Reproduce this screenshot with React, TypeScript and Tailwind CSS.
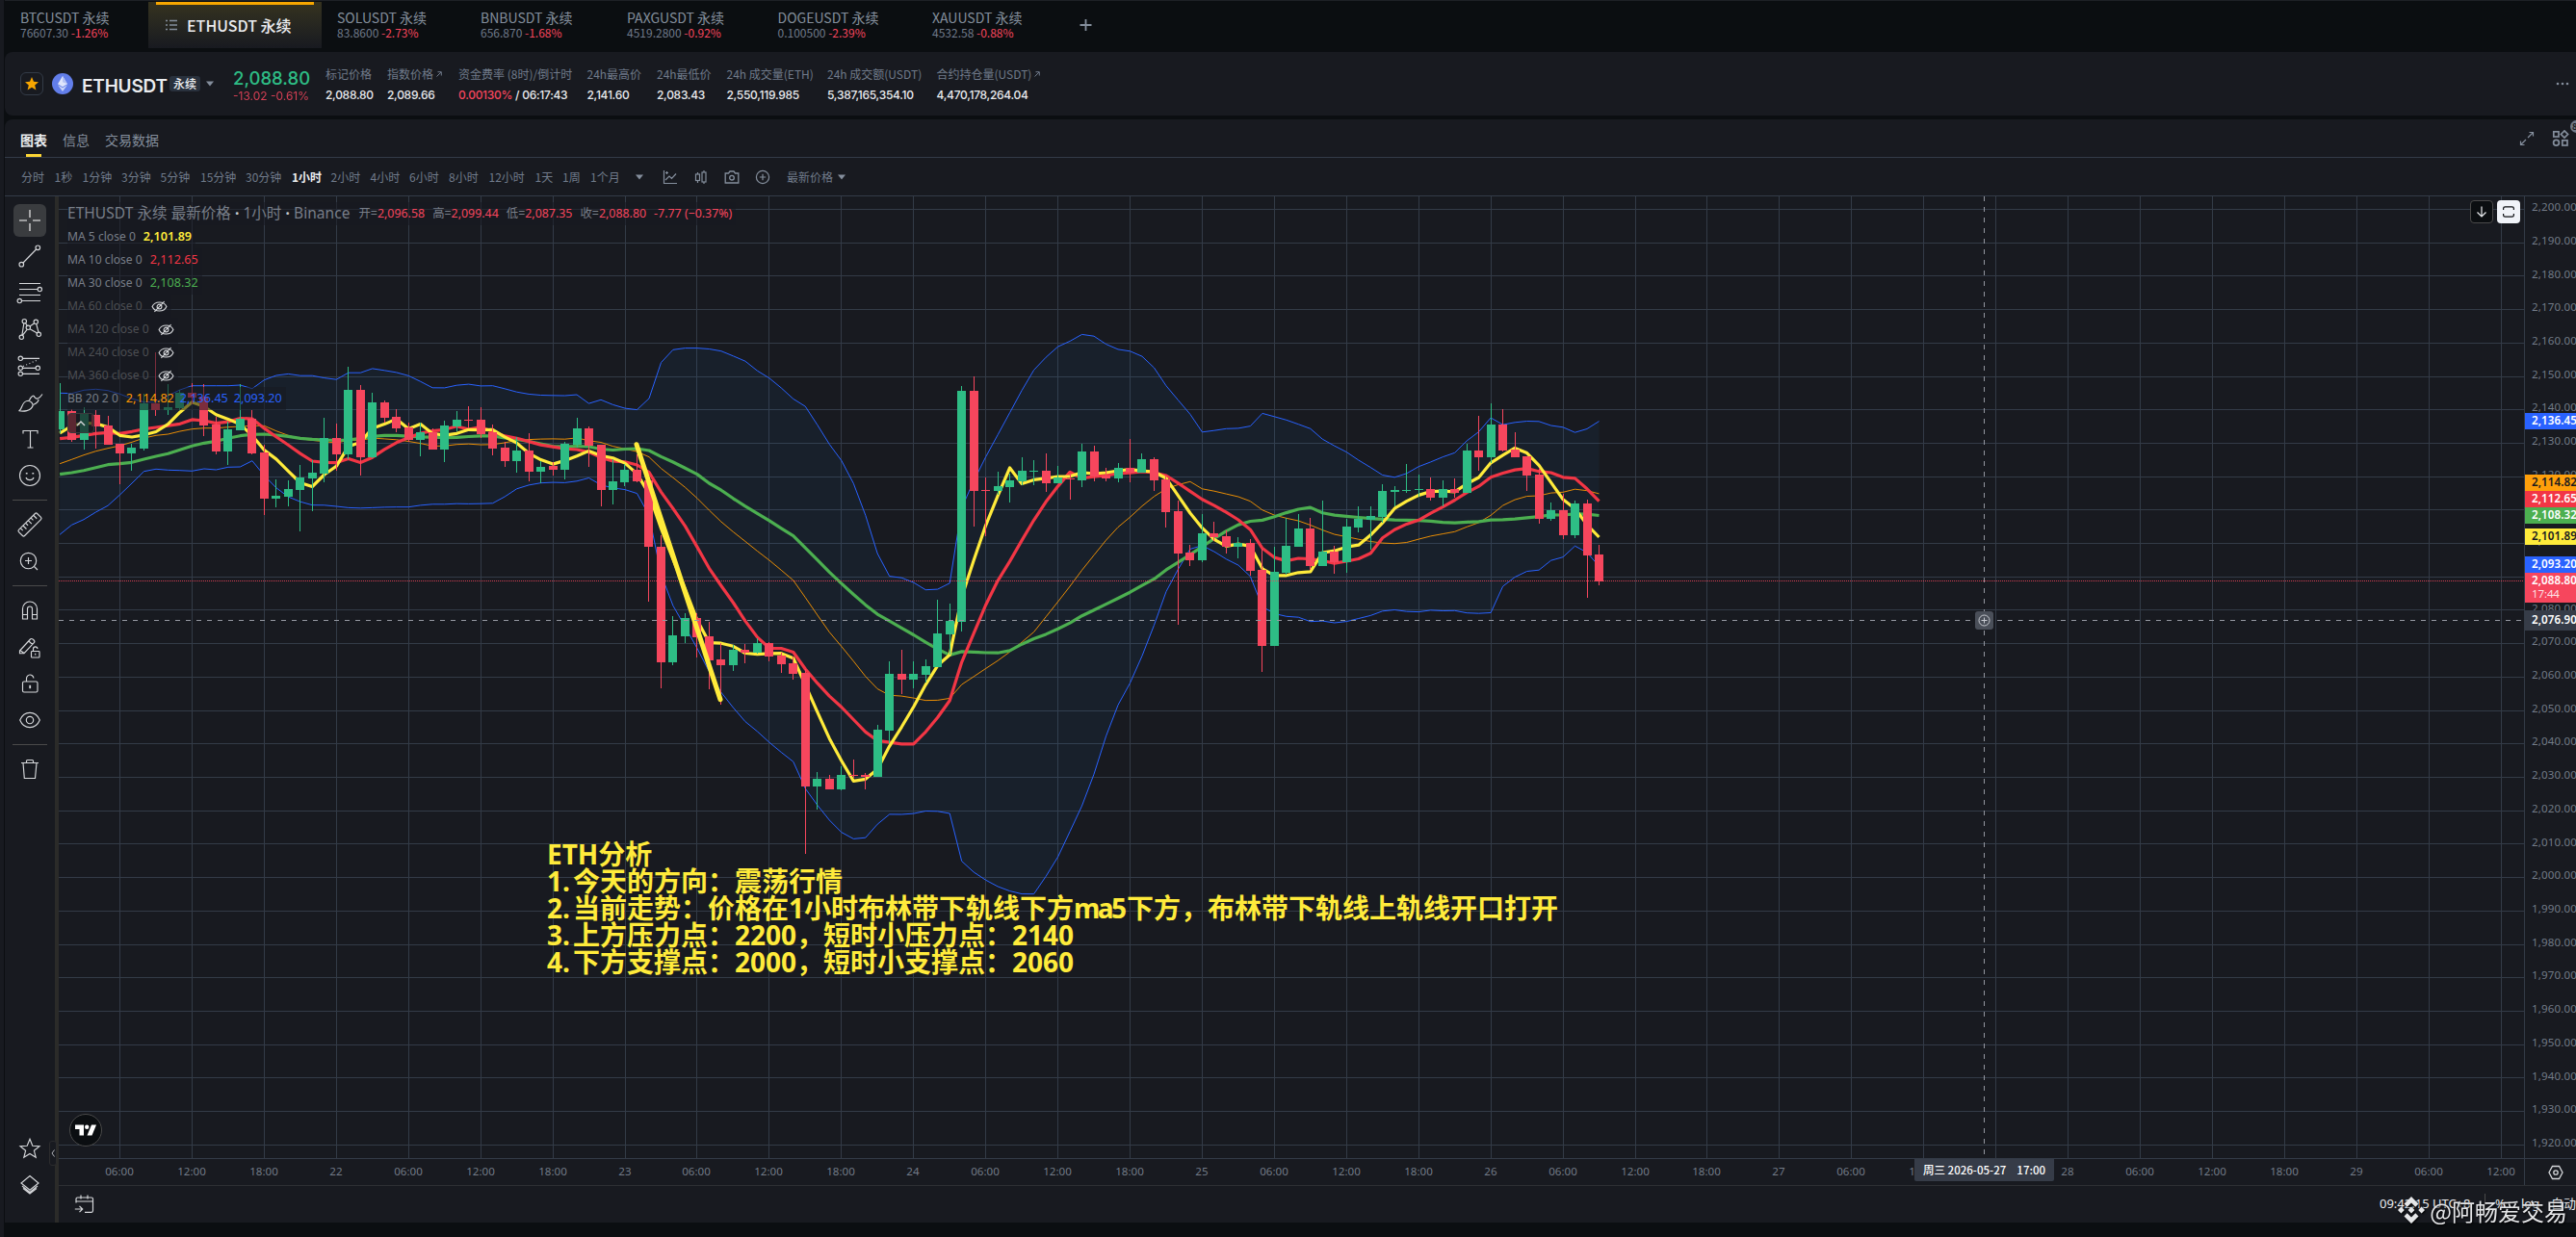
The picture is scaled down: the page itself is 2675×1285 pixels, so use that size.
import React from "react";

/* ---------- chart geometry ---------- */
const CHART_W = 2560;
const CHART_H = 999;
const LEFT = 61;
const TOP = 204;
const BAR = 12.488;
const FIRST = -5;
const barX = (i: number) => 124.5 + BAR * i - LEFT;
const priceY = (p: number) => 217.5 + ((2200 - p) / 10) * 34.708 - TOP;

type Row = [number, number, number, number, number]; // up, bodyTop, bodyBottom, high, low
type Candle = { up: boolean; top: number; bottom: number; high: number; low: number };

// Every series block keeps its heights in its own unit, measured from its own base line.
const block = (base: number, unit: number, rows: Row[]): Candle[] =>
  rows.map(([up, a, b, h, l]) => ({
    up: up === 1,
    top: base + a / unit - TOP,
    bottom: base + b / unit - TOP,
    high: base + h / unit - TOP,
    low: base + l / unit - TOP,
  }));

const candles: Candle[] = [
  ...block(190, 3, [
    [1, 711, 768, 624, 780], [0, 711, 800, 706, 808], [1, 720, 800, 700, 830], [0, 723, 758, 708, 828],
    [0, 756, 815, 726, 815], [0, 813, 842, 813, 938], [1, 825, 842, 813, 896], [1, 687, 827, 657, 833],
    [0, 687, 708, 528, 726], [1, 699, 708, 628, 723], [1, 654, 702, 645, 708], [0, 654, 668, 624, 690],
    [0, 666, 755, 627, 789], [0, 753, 836, 729, 846], [1, 768, 836, 744, 879], [1, 735, 770, 627, 770],
    [0, 735, 842, 707, 846], [0, 840, 983, 815, 1034], [1, 975, 983, 924, 1010], [1, 954, 978, 927, 1007],
    [1, 918, 956, 879, 1086], [1, 903, 920, 864, 1022], [1, 795, 905, 732, 933], [0, 795, 845, 750, 896],
    [1, 645, 845, 573, 860], [0, 645, 854, 630, 912], [1, 684, 854, 654, 857], [0, 684, 731, 678, 747],
    [0, 729, 765, 705, 777],
  ]),
  ...block(330, 2.703, [
    [0, 307, 343, 295, 350], [1, 323, 343, 295, 389], [0, 323, 370, 312, 370], [1, 303, 370, 289, 406],
    [1, 287, 305, 262, 320], [0, 287, 289, 249, 312], [0, 287, 327, 251, 337], [0, 323, 367, 300, 387],
    [0, 365, 403, 350, 419], [1, 373, 403, 335, 435], [0, 373, 433, 324, 460], [1, 419, 433, 402, 465],
    [0, 416, 427, 406, 443], [1, 354, 427, 349, 454], [1, 311, 358, 281, 364], [0, 311, 360, 305, 419],
    [0, 357, 484, 357, 530], [1, 460, 484, 398, 524], [1, 427, 462, 412, 473], [0, 427, 460, 384, 463],
    [0, 457, 643, 450, 798], [0, 643, 968, 611, 1041], [1, 892, 968, 838, 976], [1, 843, 895, 830, 914],
    [0, 843, 898, 830, 954], [0, 895, 962, 854, 1044], [0, 960, 976, 914, 1087], [1, 933, 976, 919, 992],
    [0, 933, 941, 916, 971], [1, 914, 941, 900, 944], [0, 914, 952, 911, 965], [0, 949, 973, 941, 998],
    [0, 971, 1000, 952, 1016], [0, 998, 1317, 987, 1506], [1, 1295, 1317, 1276, 1381],
  ]),
  ...block(330, 2.529, [
    [0, 1211, 1239, 1201, 1239], [1, 1201, 1239, 1179, 1242], [0, 1201, 1203, 1161, 1208], [0, 1201, 1206, 1196, 1239],
    [1, 1082, 1206, 1070, 1206], [1, 936, 1085, 903, 1118], [0, 936, 951, 873, 989], [1, 936, 951, 903, 974],
    [1, 916, 938, 898, 959], [1, 830, 918, 741, 918], [1, 797, 832, 751, 885], [1, 192, 799, 180, 824],
    [0, 192, 455, 154, 549], [0, 453, 455, 420, 574], [1, 443, 455, 405, 465], [1, 427, 445, 410, 486],
    [1, 402, 430, 367, 440], [1, 402, 404, 374, 440], [0, 402, 435, 357, 458], [1, 420, 435, 389, 435],
    [0, 422, 425, 410, 478], [1, 352, 427, 331, 445], [0, 352, 417, 336, 430], [0, 415, 422, 395, 430],
    [1, 395, 422, 382, 432], [0, 395, 407, 319, 432], [1, 372, 407, 357, 407], [0, 372, 427, 367, 455],
    [0, 425, 511, 415, 551], [0, 508, 620, 481, 807], [0, 617, 637, 597, 652], [1, 567, 637, 516, 642],
    [0, 567, 577, 536, 587],
  ]),
  ...block(380, 3, [
    [0, 531, 563, 513, 585], [1, 552, 563, 534, 600], [0, 552, 639, 540, 655], [0, 636, 873, 570, 954],
    [1, 642, 873, 564, 873], [1, 561, 645, 475, 651], [1, 507, 564, 462, 564], [0, 507, 624, 474, 636],
    [1, 579, 624, 420, 624], [0, 579, 612, 561, 648], [1, 501, 612, 477, 645], [1, 477, 504, 438, 519],
    [1, 468, 480, 438, 573], [1, 390, 471, 369, 489], [1, 387, 393, 375, 438], [1, 387, 389, 306, 396],
    [1, 384, 387, 339, 408], [0, 384, 411, 348, 420], [1, 384, 411, 357, 438], [0, 384, 396, 351, 411],
    [1, 264, 396, 243, 396], [0, 264, 285, 156, 327], [1, 183, 285, 117, 303], [0, 183, 264, 135, 267],
    [0, 261, 285, 207, 285], [0, 282, 342, 282, 390], [0, 339, 477, 318, 492], [1, 450, 477, 426, 483],
    [0, 450, 528, 399, 540], [1, 429, 528, 420, 537], [0, 429, 591, 417, 723], [0, 588, 672, 558, 684],
  ]),
];

const closes = candles.map((c) => (c.up ? c.top : c.bottom));
const seed = (vals: number[]) => vals.map((v) => 190 + v / 3 - TOP);

// Moving average; the bars before a full window come from the seed.
const sma = (n: number, lead: number[]) =>
  closes.map((_, k) =>
    k < lead.length ? lead[k] : closes.slice(k - n + 1, k + 1).reduce((a, b) => a + b, 0) / n
  );

const ma5 = sma(5, seed([780, 757, 748, 750]));
const ma10 = sma(10, seed([797, 793, 787, 781, 778, 781, 775, 767, 762]));
const mid = sma(20, seed([875, 862, 848, 836, 827, 819, 808, 795, 787, 783, 774, 767, 764, 764, 761, 759, 757, 757, 773]));
const ma30 = sma(30, seed([
  908, 903, 896, 887, 878, 875, 871, 861, 852, 844, 832, 820, 811, 805, 796, 788, 784, 783, 786, 790, 796, 799, 801, 802,
  801, 796, 790, 787, 787,
]));
const upperLead = seed([655, 656, 646, 643, 647, 658, 672, 683, 683, 663, 645, 632, 632, 632, 632, 630, 641, 614, 600]);
const lowerLead = seed([1096, 1066, 1049, 1026, 1006, 972, 936, 899, 892, 895, 896, 898, 891, 894, 886, 885, 866, 912, 950]);
const dev = closes.map((_, k) => {
  if (k < 19) return 0;
  const w = closes.slice(k - 19, k + 1);
  return 2 * Math.sqrt(w.reduce((a, b) => a + (b - mid[k]) ** 2, 0) / 20);
});
const upper = mid.map((m, k) => (k < 19 ? upperLead[k] : m - dev[k]));
const lower = mid.map((m, k) => (k < 19 ? lowerLead[k] : m + dev[k]));

const pts = (ys: number[]) => ys.map((y, k) => `${(barX(k + FIRST)).toFixed(1)},${y.toFixed(1)}`);

const vGrid = Array.from({ length: 34 }, (_, k) => Math.floor(124.5 + 74.93 * k) - LEFT + 0.5);
const prices = Array.from({ length: 29 }, (_, k) => 2200 - k * 10);
const fmt = (p: number) => `${Math.floor(p / 1000)},${String(p % 1000).padStart(3, "0")}.00`;

const days: Record<number, string> = { 3: "22", 7: "23", 11: "24", 15: "25", 19: "26", 23: "27", 27: "28", 31: "29" };
const timeLabel = (k: number) => days[k] ?? ["06:00", "12:00", "18:00"][k % 4];

function Chart() {
  return (
    <svg width={CHART_W} height={CHART_H} className="block">
      <g stroke="#333b47" strokeWidth="1">
        {vGrid.map((x) => <path key={x} d={`M${x} 0V${CHART_H}`} />)}
        {prices.map((p) => <path key={p} d={`M0 ${Math.floor(priceY(p)) + 0.5}H${CHART_W}`} />)}
      </g>
      <polygon points={[...pts(upper), ...pts(lower).reverse()].join(" ")} fill="#2196f3" fillOpacity="0.055" />
      <g fill="none" strokeLinejoin="round">
        <polyline points={pts(upper).join(" ")} stroke="#2962ff" strokeWidth="1" />
        <polyline points={pts(lower).join(" ")} stroke="#2962ff" strokeWidth="1" />
        <polyline points={pts(mid).join(" ")} stroke="#ff9800" strokeWidth="0.9" />
        <polyline points={pts(ma30).join(" ")} stroke="#4caf50" strokeWidth="3.2" />
        <polyline points={pts(ma10).join(" ")} stroke="#f23645" strokeWidth="3.2" />
        <polyline points={pts(ma5).join(" ")} stroke="#ffeb3b" strokeWidth="3.2" />
      </g>
      <g shapeRendering="crispEdges">
        {candles.map((c, k) => {
          const x = Math.floor(barX(k + FIRST));
          return (
            <g key={k} fill={c.up ? "#2ebd85" : "#f6465d"}>
              <rect x={x} y={c.high} width="1" height={Math.max(1, c.low - c.high)} />
              <rect x={x - 4} y={c.top} width="9" height={Math.max(1, c.bottom - c.top)} />
            </g>
          );
        })}
      </g>
      <path d="M0 399.5H2560" stroke="#f6465d" strokeDasharray="1 1" strokeOpacity="0.85" shapeRendering="crispEdges" />
      <path d="M600 257.7L687 522.6" stroke="#ffeb3b" strokeWidth="5" strokeLinecap="round" />
      <path d="M0 440.5H2560M1999.5 0V999" stroke="#9598a1" strokeDasharray="5 6" />
      <rect x="1990" y="431" width="19" height="19" rx="3" fill="#4a4f59" />
      <circle cx="1999.5" cy="440.5" r="5.5" fill="none" stroke="#c9ccd2" />
      <path d="M1999.5 437.5v6M1996.5 440.5h6" stroke="#c9ccd2" />
    </svg>
  );
}

const tags: [string, number, number, string, string][] = [
  ["2,136.45", 429, 17, "#2962ff", "#fff"],
  ["2,114.82", 493, 17, "#ff9f0a", "#181a20"],
  ["2,112.65", 510, 17, "#f23645", "#fff"],
  ["2,108.32", 527, 17, "#4caf50", "#fff"],
  ["2,101.89", 549, 17, "#ffeb3b", "#181a20"],
  ["2,093.20", 578, 17, "#2962ff", "#fff"],
  ["2,088.80", 595, 31, "#f6465d", "#fff"],
  ["2,076.90", 634, 21, "#363c48", "#fff"],
];

function PriceAxis() {
  return (
    <svg width="54" height={CHART_H} className="block border-l border-[#333b47]" fontFamily='"Noto Sans",sans-serif' fontSize="11.6">
      {prices.map((p) => (
        <text key={p} x="7" y={priceY(p) + 1.6} textLength="47" fill="#848e9c" fillOpacity="0.85">{fmt(p)}</text>
      ))}
      {tags.map(([t, y, h, bg, fg]) => (
        <g key={t}>
          <rect x="0" y={y - TOP} width="54" height={h} fill={bg} />
          <text x="7" y={y - TOP + (h === 21 ? 14 : 12)} textLength="47" fill={fg} fontWeight="600">{t}</text>
        </g>
      ))}
      <text x="7" y="417" textLength="29" fill="#fff" fillOpacity="0.85">17:44</text>
    </svg>
  );
}

function TimeAxis() {
  return (
    <div className="relative h-[28px] w-[2560px] shrink-0 overflow-hidden">
      <svg width="2560" height="28" className="block" fontFamily='"Noto Sans",sans-serif' fontSize="11.6" textAnchor="middle" fill="#848e9c" fillOpacity="0.85">
        {vGrid.map((x, k) => (
          <text key={k} x={x - 0.5} y="17">{timeLabel(k)}</text>
        ))}
      </svg>
      <div className="absolute left-[1927px] top-0 flex h-[23px] w-[145px] items-center justify-between rounded-b-xs bg-[#363c48] px-[9px] text-[11.5px] font-medium text-white">
        <span>周三 2026-05-27</span>
        <span>17:00</span>
      </div>
    </div>
  );
}

/* ---------- icons ---------- */
function Tool({ h, children }: { h: number; children: React.ReactNode }) {
  return (
    <div className="flex w-full shrink-0 items-center justify-center" style={{ height: h }}>
      <svg width="36" height="36" viewBox="0 0 36 36" fill="none" stroke="#d5d7da" strokeWidth="1.15">{children}</svg>
    </div>
  );
}
const Sep = () => <div className="mx-[8px] h-px w-[36px] shrink-0 bg-[#4a4a4a]" />;

function EyeOff() {
  return (
    <svg width="17" height="13" viewBox="0 0 18 14" fill="none" stroke="#d5d7da" strokeWidth="1.2">
      <path d="M1 7C4 0.500 14 0.500 17 7C14 13.500 4 13.500 1 7Z" />
      <circle cx="9" cy="7" r="2.600" />
      <path d="M3.500 12.800L14.500 1.200" />
    </svg>
  );
}

const Caret = () => (
  <svg width="8" height="6" viewBox="0 0 8 6" fill="#848e9c"><path d="M0 0.500H8L4 5.500Z" /></svg>
);

function LeftTools() {
  return (
    <aside className="flex w-[52px] shrink-0 flex-col pt-[6px]">
      <div className="mx-[9px] mt-[2px] flex h-[34px] w-[34px] shrink-0 items-center justify-center rounded-md bg-[#3a3c3f]">
        <svg width="24" height="24" viewBox="0 0 24 24" fill="none" stroke="#fff" strokeWidth="1.1">
          <path d="M12 1v8M12 15v8M1 12h8M15 12h8" />
        </svg>
      </div>
      <div className="h-px shrink-0" />
      <Tool h={38}><circle cx="9.300" cy="26.700" r="2.300" /><circle cx="26.300" cy="9.300" r="2.300" /><path d="M11 25L24.600 11" /></Tool>
      <Tool h={38}><path d="M7 8.500h22M7 14.500h19M7 20.500h22M10 26.500h19" /><circle cx="28.300" cy="14.500" r="2.200" /><circle cx="7.300" cy="26.500" r="2.200" /></Tool>
      <Tool h={38}>
        <path d="M9.900 24.200L11.800 12M13.500 11.600L15.300 14.500M10.400 24.400L15.300 18.200M18 15L22.700 11.700M24.700 12.500L27 21.200M18 17.700L25.600 22" />
        <circle cx="12.300" cy="9.700" r="2.200" /><circle cx="24.300" cy="10.300" r="2.200" /><circle cx="16.300" cy="16.300" r="2.200" /><circle cx="9.300" cy="26.300" r="2.200" /><circle cx="27.300" cy="23.300" r="2.200" />
      </Tool>
      <Tool h={38}>
        <circle cx="8.300" cy="10.300" r="2.200" /><circle cx="8.300" cy="20.300" r="2.200" /><circle cx="26.300" cy="20.300" r="2.200" /><circle cx="8.300" cy="26.300" r="2.200" />
        <path d="M10.500 10.300H28M10.500 20.300H24M10.500 26.300H28" /><path d="M11 18.500L27 11.500" strokeDasharray="1 2.500" />
      </Tool>
      <Tool h={38}>
        <path d="M6.500 26.700C11 25.500 8.500 16.500 16.500 16.200C19 17 21 19 21.200 21C19.500 27.500 11 27.500 6.500 26.700Z" />
        <path d="M17.500 16C18 14.500 20 11 22 11M21.500 20.500C25 19 27 17.500 27 15M22 11C24.500 16.500 28 14 31 9.500" />
      </Tool>
      <Tool h={38}><path d="M11 12.500V9.500H26V12.500M18.500 9.500V27M15.500 27H21.500" /></Tool>
      <Tool h={38}><circle cx="18" cy="18" r="10.500" /><path d="M14 20c1 3.500 7 3.500 8 0" /><path d="M14.700 15v1.500M21.300 15v1.500" strokeWidth="1.800" /></Tool>
      <div className="h-[6px] shrink-0" />
      <Sep />
      <div className="h-[6px] shrink-0" />
      <Tool h={38}><g transform="rotate(-45 18 18)"><rect x="4.500" y="13.700" width="27" height="8.600" rx="1.500" /><path d="M8.500 13.700v3.500M12.300 13.700v5M16.100 13.700v3.500M19.900 13.700v5M23.700 13.700v3.500M27.500 13.700v5" /></g></Tool>
      <Tool h={38}><circle cx="16.500" cy="17.500" r="8.200" /><path d="M16.500 14v7M13 17.500h7M22.500 23.500L26 27" /></Tool>
      <div className="h-[6px] shrink-0" />
      <Sep />
      <div className="h-[6px] shrink-0" />
      <Tool h={38}><path d="M10.500 27V16.500a7.500 7.500 0 0 1 15 0V27H20.500V16.500a2.500 2.500 0 0 0 -5 0V27ZM10.500 22.500h5M20.500 22.500h5" /></Tool>
      <Tool h={38}><path d="M7.500 22L18.500 10C20 8.500 24 11.500 22.500 13.500L12 24.700H7.500ZM16.800 12L20.800 15.500M7.800 21.500L12 24.500" /><rect x="19.500" y="22.500" width="8.500" height="6.500" rx="0.800" /><path d="M21.500 22.500V20a2.200 2.200 0 0 1 4.400 0" /><path d="M23.700 24.800v1.600" /></Tool>
      <Tool h={38}><rect x="10.500" y="16" width="15.500" height="11" rx="1.500" /><path d="M14.500 16V13a3.700 3.700 0 0 1 7.400 -0.500" /><path d="M18.200 19.800v3.400" strokeWidth="1.800" /></Tool>
      <Tool h={38}><path d="M7.700 18C12 7.800 24 7.800 28.300 18C24 28.200 12 28.200 7.700 18Z" /><circle cx="18" cy="18" r="3.700" /></Tool>
      <div className="h-[6px] shrink-0" />
      <Sep />
      <div className="h-[6px] shrink-0" />
      <Tool h={38}><path d="M9 11.500H27M14.500 11.500V9.500c0-.8.500-1 1-1h5c.5 0 1 .2 1 1V11.500M11 11.500L12.300 27.500H23.500L25 11.500" /></Tool>
      <div className="min-h-0 flex-1" />
      <Tool h={38}><path d="M18 8.300L20.800 15.200L28 15.700L22.400 20.300L24.200 27.300L18 23.500L11.800 27.300L13.600 20.300L8 15.700L15.200 15.200Z" /></Tool>
      <Tool h={38}><path d="M18 8.500L27 16L18 23.200L9 16ZM10 19L18 25.500L26 19M11 21.500L18 27L25 21.500" /></Tool>
      <div className="h-[20px] shrink-0" />
    </aside>
  );
}

/* ---------- data ---------- */
const symbols: [string, string, string, number][] = [
  ["SOLUSDT", "83.8600", "-2.73%", 149],
  ["BNBUSDT", "656.870", "-1.68%", 152],
  ["PAXGUSDT", "4519.2800", "-0.92%", 156.500],
  ["DOGEUSDT", "0.100500", "-2.39%", 160.500],
  ["XAUUSDT", "4532.58", "-0.88%", 153],
];

function Sym({ s, p, c, w }: { s: string; p: string; c: string; w: number }) {
  return (
    <div className="shrink-0 whitespace-nowrap pt-[9px]" style={{ width: w }}>
      <div className="text-[14px] leading-[17px] text-[#848e9c]">{s} 永续</div>
      <div className="text-[12px] leading-[13px] text-[#707a8a]">{p} <span className="text-[#f6465d]">{c}</span></div>
    </div>
  );
}

const intervals: [string, number][] = [
  ["分时", 34.500], ["1秒", 29], ["1分钟", 40.500], ["3分钟", 40.500], ["5分钟", 41.500], ["15分钟", 47], ["30分钟", 48],
  ["1小时", 40.500], ["2小时", 41], ["4小时", 40.500], ["6小时", 41], ["8小时", 41.500], ["12小时", 48], ["1天", 28.500],
  ["1周", 29], ["1个月", 47],
];

const stats: [string, string, number, boolean][] = [
  ["24h最高价", "2,141.60", 72.500, false],
  ["24h最低价", "2,083.43", 72.500, false],
  ["24h 成交量(ETH)", "2,550,119.985", 104.500, false],
  ["24h 成交额(USDT)", "5,387,165,354.10", 113.500, false],
  ["合约持仓量(USDT)", "4,470,178,264.04", 130, true],
];

function Stat({ label, w, arrow, children }: { label: string; w: number; arrow?: boolean; children: React.ReactNode }) {
  return (
    <div className="shrink-0 whitespace-nowrap pt-px" style={{ width: w }}>
      <div className="flex items-center gap-[3px] text-[12px] leading-[18px] text-[#707a8a]">
        {label}
        {arrow && (
          <svg width="6" height="6" viewBox="0 0 6 6" fill="none" stroke="#707a8a"><path d="M0.500 5.500L5 1M1.500 0.700H5.300V4.500" /></svg>
        )}
      </div>
      <div className="mt-[4px] font-[Inter] text-[12px] font-medium leading-[18px] tracking-[-0.28px] text-[#eaecef]">{children}</div>
    </div>
  );
}

const hiddenMas = ["60", "120", "240", "360"];
const notes = [
  "ETH分析",
  "1.今天的方向：震荡行情",
  "2.当前走势：价格在1小时布林带下轨线下方ma5下方，布林带下轨线上轨线开口打开",
  "3.上方压力点：2200，短时小压力点：2140",
  "4.下方支撑点：2000，短时小支撑点：2060",
];

// Widens the list period and tightens lowercase Latin inside a note.
function Note({ text }: { text: string }) {
  return (
    <div className="h-[28px]">
      {text.split(/(\.|ma)/).map((part, i) => (
        <span key={i} className={part === "." ? "tracking-[3px]" : part === "ma" ? "tracking-[-2.5px]" : ""}>{part}</span>
      ))}
    </div>
  );
}

function Legend() {
  const row = "flex h-[24px] w-fit items-center whitespace-nowrap bg-[#181a20]/55 pr-[4px] leading-none";
  return (
    <div className="absolute left-[9px] top-[6px] font-['Noto_Sans','Noto_Sans_CJK_SC',sans-serif] text-[12.1px] text-[#787e88]">
      <div className={row}>
        <span className="text-[15.5px] tracking-[0.05px]">ETHUSDT 永续 最新价格 <b className="text-[#c4c7cc]">·</b> 1小时 <b className="text-[#c4c7cc]">·</b> Binance</span>
        <span className="ml-[9px] flex gap-[8px] text-[12.4px] text-[#f6465d]">
          <span><span className="text-[#787e88]">开=</span>2,096.58</span>
          <span><span className="text-[#787e88]">高=</span>2,099.44</span>
          <span><span className="text-[#787e88]">低=</span>2,087.35</span>
          <span><span className="text-[#787e88]">收=</span>2,088.80</span>
          <span>-7.77 (−0.37%)</span>
        </span>
      </div>
      <div className={row}>MA 5 close 0<span className="ml-[8px] text-[12.6px] font-semibold text-[#ffeb3b]">2,101.89</span></div>
      <div className={row}>MA 10 close 0<span className="ml-[8px] text-[12.6px] text-[#f23645]">2,112.65</span></div>
      <div className={row}>MA 30 close 0<span className="ml-[8px] text-[12.6px] text-[#4caf50]">2,108.32</span></div>
      {hiddenMas.map((m) => (
        <div key={m} className={row}>
          <span className="mr-[9px] text-[#4c4e52]">MA {m} close 0</span>
          <EyeOff />
        </div>
      ))}
      <div className={row}>
        BB 20 2 0
        <span className="ml-[8px] text-[12.6px] text-[#ff9800]">2,114.82</span>
        <span className="ml-[6px] text-[12.6px] text-[#2962ff]">2,136.45</span>
        <span className="ml-[6px] text-[12.6px] text-[#2962ff]">2,093.20</span>
      </div>
      <div className="mt-[3px] flex h-[21px] w-[28px] items-center justify-center rounded-[4px] border border-[#3a3a3c] bg-[#181a20]/70">
        <svg width="10" height="6" viewBox="0 0 10 6" fill="none" stroke="#d5d7da" strokeWidth="1.400"><path d="M1 5L5 1L9 5" /></svg>
      </div>
    </div>
  );
}

export default function App() {
  return (
    <div className="relative flex h-[1285px] w-[2675px] overflow-hidden bg-[#0b0e11] font-['Noto_Sans_CJK_SC',sans-serif]">
      <div className="w-[4px] shrink-0 bg-[#181a20]" />
      <div className="ml-px flex min-w-0 flex-1 flex-col">
        {/* symbol tabs */}
        <div className="flex h-[54px] shrink-0 border-t border-[#1e2126] pl-[16px]">
          <Sym s="BTCUSDT" p="76607.30" c="-1.26%" w={133} />
          <div className="mt-px flex h-[48px] w-[180px] shrink-0 flex-col items-center bg-linear-to-b from-[#36331f] to-[#181a20]">
            <div className="h-[3px] w-[164px] shrink-0 bg-[#f7a600]" />
            <div className="flex w-full flex-1 items-center gap-[10px] pb-[3px] pl-[18px]">
              <svg width="12" height="12" viewBox="0 0 12 12" stroke="#848e9c" strokeWidth="1.600"><path d="M0 1.500h2M4 1.500h8M0 6h2M4 6h8M0 10.500h2M4 10.500h8" /></svg>
              <span className="whitespace-nowrap text-[16px] font-medium leading-[20px] text-[#eaecef]">ETHUSDT 永续</span>
            </div>
          </div>
          <div className="w-[16px] shrink-0" />
          {symbols.map(([s, p, c, w]) => <Sym key={s} s={s} p={p} c={c} w={w} />)}
          <svg width="13" height="12" viewBox="0 0 13 12" className="mt-[19px]" stroke="#848e9c" strokeWidth="1.800"><path d="M6.500 0v12M0.500 6h12" /></svg>
        </div>

        {/* ticker */}
        <div className="flex h-[66px] shrink-0 items-center rounded-l-lg bg-[#181a20] pl-[16px]">
          <div className="flex h-[24px] w-[24px] shrink-0 items-center justify-center rounded-md border border-[#333b47]">
            <svg width="14" height="14" viewBox="0 0 14 14" fill="#f7a600"><path d="M7 0L9 4.800L14 5.200L10.200 8.500L11.400 13.600L7 10.800L2.600 13.600L3.800 8.500L0 5.200L5 4.800Z" /></svg>
          </div>
          <svg width="22" height="22" viewBox="0 0 22 22" className="ml-[9px] shrink-0">
            <circle cx="11" cy="11" r="11" fill="#627eea" />
            <path d="M11 3L6 11.300L11 14.200L16 11.300Z" fill="#dfe5fb" />
            <path d="M11 3L16 11.300L11 9.200Z" fill="#b4c2f4" />
            <path d="M6 12.300L11 19L16 12.300L11 15.200Z" fill="#cbd5f8" />
          </svg>
          <span className="ml-[9px] w-[91px] shrink-0 pt-[5px] font-[Inter] text-[19px] font-semibold leading-none tracking-[-0.2px] text-[#eaecef]">ETHUSDT</span>
          <span className="flex h-[16px] w-[32px] shrink-0 items-center justify-center rounded-[3px] bg-[#29313d] text-[12px] font-medium text-[#eaecef]">永续</span>
          <span className="ml-[6px] shrink-0"><Caret /></span>
          <div className="ml-[20px] w-[96px] shrink-0 pt-[2px] font-[Inter]">
            <div className="text-[18.500px] font-medium leading-[24px] text-[#2ebd85]">2,088.80</div>
            <div className="whitespace-nowrap text-[12px] leading-[14px] text-[#f6465d] opacity-85">-13.02 -0.61%</div>
          </div>
          <Stat label="标记价格" w={64}>2,088.80</Stat>
          <Stat label="指数价格" w={74} arrow>2,089.66</Stat>
          <Stat label="资金费率 (8时)/倒计时" w={133.5}><span className="text-[#f6465d]">0.00130%</span> / 06:17:43</Stat>
          {stats.map(([l, v, w, a]) => <Stat key={l} label={l} w={w} arrow={a}>{v}</Stat>)}
          <div className="flex-1" />
          <svg width="14" height="4" viewBox="0 0 14 4" className="mr-[7px]" fill="#848e9c"><circle cx="2" cy="2" r="1.300" /><circle cx="7" cy="2" r="1.300" /><circle cx="12" cy="2" r="1.300" /></svg>
        </div>

        {/* chart panel */}
        <section className="mt-[4px] flex h-[1146px] shrink-0 flex-col rounded-tl-lg bg-[#181a20]">
          <div className="relative flex h-[40px] shrink-0 items-end border-b border-[#333b47] pl-[16px] text-[14px] text-[#848e9c]">
            <div className="flex w-[44px] shrink-0 flex-col">
              <span className="font-bold leading-[20px] text-[#eaecef]">图表</span>
              <span className="ml-[6px] mt-[5px] h-[3px] w-[16px] bg-[#fcd535]" />
            </div>
            <span className="w-[44px] shrink-0 pb-[8px] leading-[20px]">信息</span>
            <span className="shrink-0 pb-[8px] leading-[20px]">交易数据</span>
            <div className="flex-1" />
            <svg width="16" height="16" viewBox="0 0 16 16" className="mb-[11px] mr-[18px]" fill="none" stroke="#848e9c" strokeWidth="1.200"><path d="M9 7L14.500 1.500M10.500 1.500h4v4M7 9L1.500 14.500M1.500 10.500v4h4" /></svg>
            <svg width="18" height="18" viewBox="0 0 18 18" className="mb-[10px] mr-[7px]" fill="none" stroke="#848e9c" strokeWidth="1.700"><rect x="1.800" y="1.800" width="5.200" height="5.200" /><path d="M13 0.900L16.600 4.500L13 8.100L9.400 4.500Z" /><circle cx="4.500" cy="13.200" r="2.900" /><rect x="10.800" y="10.800" width="5.200" height="5.200" /></svg>
            <div className="absolute -right-[7px] top-px h-[13px] w-[13px] rounded-full bg-[#707a8a] pl-[2px] text-[9px] font-bold leading-[13px] text-[#181a20]">8</div>
          </div>

          <div className="flex h-[40px] shrink-0 items-center border-b border-[#333b47] pl-[17px] text-[12px] text-[#707a8a]">
            {intervals.map(([t, w]) => (
              <span key={t} className={t === "1小时" ? "shrink-0 whitespace-nowrap font-bold text-[#eaecef]" : "shrink-0 whitespace-nowrap"} style={{ width: w }}>{t}</span>
            ))}
            <Caret />
            <svg width="16" height="16" viewBox="0 0 16 16" className="ml-[20px] shrink-0" fill="none" stroke="#848e9c" strokeWidth="1.200"><path d="M1.500 1V14.500H15M3 11L7 7L9.500 9.500L14 4.500M4.500 2v3M3 3.500h3" /></svg>
            <svg width="14" height="16" viewBox="0 0 14 16" className="ml-[17px] shrink-0" fill="none" stroke="#848e9c" strokeWidth="1.200"><rect x="1.500" y="5" width="4" height="6.500" /><path d="M3.500 3v2M3.500 11.500v2.500M10 1v2M10 13v2" /><rect x="8" y="3" width="4" height="10" /></svg>
            <svg width="16" height="14" viewBox="0 0 16 14" className="ml-[17px] shrink-0" fill="none" stroke="#848e9c" strokeWidth="1.300"><path d="M1.200 3H4.500L6 1H10L11.500 3H14.800V13H1.200Z" /><circle cx="8" cy="7.700" r="2.300" /></svg>
            <svg width="16" height="16" viewBox="0 0 16 16" className="ml-[16px] shrink-0" fill="none" stroke="#848e9c" strokeWidth="1.200"><circle cx="8" cy="8" r="6.600" /><path d="M8 4.800v6.400M4.800 8h6.400" /></svg>
            <span className="ml-[17px] mr-[5px] shrink-0">最新价格</span>
            <Caret />
          </div>

          <div className="flex min-h-0 flex-1">
            <LeftTools />
            <div className="relative w-[4px] shrink-0 bg-[#2b2b29]">
              <div className="absolute bottom-[59px] -left-[6px] flex h-[26px] w-[8px] items-center justify-center rounded-[3px] border border-[#2b2b2d] bg-[#181a20]">
                <svg width="4" height="8" viewBox="0 0 4 8" fill="none" stroke="#b0b3b8"><path d="M3.500 0.500L1 4L3.500 7.500" /></svg>
              </div>
            </div>
            <div className="flex min-w-0 flex-1 flex-col">
              <div className="flex h-[999px] shrink-0">
                <div className="relative w-[2560px] shrink-0">
                  <Chart />
                  <Legend />
                  <div className="absolute left-[507px] top-[669px] whitespace-nowrap font-['Noto_Sans','Noto_Sans_CJK_SC',sans-serif] text-[28px] font-bold leading-[28px] text-[#ffeb3b]">
                    {notes.map((n) => <Note key={n} text={n} />)}
                  </div>
                  <div className="absolute right-[4px] top-[4px] flex gap-[4px]">
                    <div className="flex h-[24px] w-[24px] items-center justify-center rounded-[4px] border border-[#4a4a4a] bg-[#0b0e11]">
                      <svg width="12" height="12" viewBox="0 0 12 12" fill="none" stroke="#eaecef" strokeWidth="1.200"><path d="M6 0.500V10.500M1.500 6.500L6 11L10.500 6.500" /></svg>
                    </div>
                    <div className="flex h-[24px] w-[24px] items-center justify-center rounded-[4px] bg-[#f0f3f8]">
                      <svg width="12" height="12" viewBox="0 0 12 12" fill="none" stroke="#0b0e11" strokeWidth="1.200"><path d="M0.600 4V2.500C0.600 1.200 1.200 0.800 2.500 0.800H9.500C10.800 0.800 11.400 1.200 11.400 2.500V4M0.600 8V9.500C0.600 10.800 1.200 11.200 2.500 11.200H9.500C10.800 11.200 11.400 10.800 11.400 9.500V8" /></svg>
                    </div>
                  </div>
                  <div className="absolute bottom-[12px] left-[11px] flex h-[34px] w-[34px] items-center justify-center rounded-full border border-[#4a4a4a] bg-[#0b0e11]">
                    <svg width="22" height="12" viewBox="0 0 22 12" fill="#fff"><path d="M0 0.500H9V11.500H4.500V5H0Z" /><circle cx="12.200" cy="2.700" r="2.200" /><path d="M17 0.500H22L17.500 11.500H12.500Z" /></svg>
                  </div>
                </div>
                <PriceAxis />
              </div>
              <div className="flex h-[29px] shrink-0 border-y border-[#333b47] border-b-[#2e3033]">
                <TimeAxis />
                <div className="flex flex-1 items-center border-l border-[#333b47] pl-[24px]">
                  <svg width="16" height="16" viewBox="0 0 16 16" className="shrink-0" fill="none" stroke="#d5d7da" strokeWidth="1.300"><path d="M4.500 1.500H11.500L15 8L11.500 14.500H4.500L1 8Z" /><circle cx="8" cy="8" r="2.200" /></svg>
                </div>
              </div>
              <div className="flex flex-1 items-center pb-px pl-[16px] text-[12px]">
                <svg width="22" height="20" viewBox="0 0 22 20" fill="none" stroke="#d5d7da" strokeWidth="1.200"><path d="M2 8.500V4.500C2 3.500 2.500 3 3.500 3H18C19 3 19.500 3.500 19.500 4.500V16.500C19.500 17.500 19 18.300 18 18.300H11M2 7H19.500M7 0.500V4.500M14 0.500V4.500M0.800 15H8.500M5.500 11.800L8.700 15L5.500 18.200" /></svg>
                <div className="flex-1" />
                <div className="flex items-center whitespace-nowrap font-['Noto_Sans','Noto_Sans_CJK_SC',sans-serif] text-[13px] text-[#eaecef]">
                  <span className="w-[109px]">09:42:15 UTC+8</span>
                  <span className="h-[22px] w-px bg-[#4a4a4a]" />
                  <span className="w-[37px] pl-[10px]">%</span>
                  <span className="w-[31px]">log</span>
                  <span>自动</span>
                </div>
              </div>
            </div>
          </div>
        </section>
      </div>

      {/* watermark */}
      <div className="absolute bottom-[10px] right-[9px] flex items-center gap-[5px] whitespace-nowrap text-[24px] leading-[34px] text-[#e6e7e9] drop-shadow-[1px_1px_1px_#000]">
        <svg width="28" height="28" viewBox="0 0 28 28" className="-mt-[3px]" fill="#e6e7e9"><path d="M14 0L21.500 7.500L18.300 10.700L14 6.400L9.700 10.700L6.500 7.500ZM14 10.600L17.400 14L14 17.400L10.600 14ZM3.400 10.600L6.800 14L3.400 17.400L0 14ZM24.600 10.600L28 14L24.600 17.400L21.200 14ZM6.500 20.500L9.700 17.300L14 21.600L18.300 17.300L21.500 20.500L14 28Z" /></svg>
        <span>@阿畅爱交易</span>
      </div>
    </div>
  );
}
